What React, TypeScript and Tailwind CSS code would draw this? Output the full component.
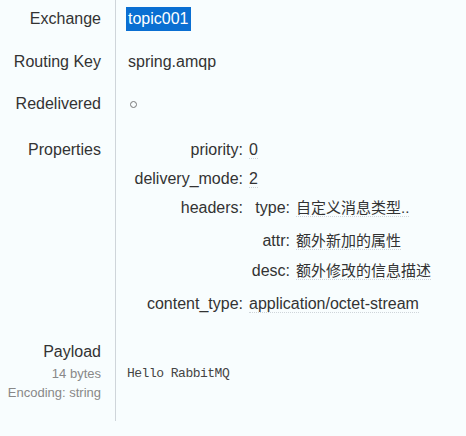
import React from "react";

const sans = { fontFamily: '"Liberation Sans", Arial, "Noto Sans CJK SC", sans-serif' };
const cjk = { fontFamily: '"Liberation Sans", Arial, "Noto Sans CJK SC", sans-serif' };

function Label({ children, pt, pb }: { children: React.ReactNode; pt: string; pb: string }) {
  return (
    <div className={`border-r border-[#cfd5da] pr-[14px] text-right ${pt} ${pb}`}>{children}</div>
  );
}

export default function App() {
  return (
    <div className="w-[466px] h-[436px] bg-[#f8fdfe] text-[#333] text-[16px] leading-[24px]" style={sans}>
      <div className="grid grid-cols-[116px_1fr]">
        {/* Exchange */}
        <Label pt="pt-[7px]" pb="pb-[9px]">Exchange</Label>
        <div className="pl-[10px] pt-[7px] pb-[9px]">
          <span className="inline-block bg-[#0a6fd2] text-white px-[2px] leading-[24px]">topic001</span>
        </div>

        {/* Routing Key */}
        <Label pt="pt-[10px]" pb="pb-[9px]">Routing Key</Label>
        <div className="pl-[12px] pt-[10px] pb-[9px]">spring.amqp</div>

        {/* Redelivered */}
        <Label pt="pt-[9px]" pb="pb-[11px]">Redelivered</Label>
        <div className="pl-[14px] pt-[9px] pb-[11px] flex items-center">
          <span className="inline-block w-[7px] h-[7px] rounded-full border border-[#777]"></span>
        </div>

        {/* Properties */}
        <Label pt="pt-[11px]" pb="pb-[12px]">Properties</Label>
        <div className="pl-[12px] pt-[11px] pb-[12px]">
          <div className="grid grid-cols-[115px_1fr] gap-x-[6px]">
            <div className="text-right">priority:</div>
            <div><span className="border-b border-dotted border-[#cfd5da]">0</span></div>

            <div className="text-right mt-[5px]">delivery_mode:</div>
            <div className="mt-[5px]"><span className="border-b border-dotted border-[#cfd5da]">2</span></div>

            <div className="text-right mt-[5px]">headers:</div>
            <div className="mt-[5px]">
              <div className="grid grid-cols-[41px_1fr] gap-x-[6px]">
                <div className="text-right">type:</div>
                <div className="text-[15px]" style={cjk}>
                  <span className="border-b border-dotted border-[#cfd5da]">自定义消息类型..</span>
                </div>
                <div className="text-right mt-[9px]">attr:</div>
                <div className="mt-[9px] text-[15px]" style={cjk}>
                  <span className="border-b border-dotted border-[#cfd5da]">额外新加的属性</span>
                </div>
                <div className="text-right mt-[6px]">desc:</div>
                <div className="mt-[6px] text-[15px]" style={cjk}>
                  <span className="border-b border-dotted border-[#cfd5da]">额外修改的信息描述</span>
                </div>
              </div>
            </div>

            <div className="text-right mt-[9px]">content_type:</div>
            <div className="mt-[9px]">
              <span className="border-b border-dotted border-[#cfd5da]">application/octet-stream</span>
            </div>
          </div>
        </div>

        {/* Payload */}
        <div className="border-r border-[#cfd5da] pr-[14px] text-right pt-[12px] pb-[19px]">
          <div>Payload</div>
          <div className="text-[13px] leading-[19px] text-[#888]">14 bytes</div>
          <div className="text-[13px] leading-[19px] text-[#888]">Encoding: string</div>
        </div>
        <div className="pl-[11px] pt-[32px]">
          <span
            className="text-[13px] leading-[20px] tracking-[-0.5px] text-[#444]"
            style={{ fontFamily: '"Liberation Mono", "Courier New", monospace' }}
          >
            Hello RabbitMQ
          </span>
        </div>
      </div>
    </div>
  );
}
